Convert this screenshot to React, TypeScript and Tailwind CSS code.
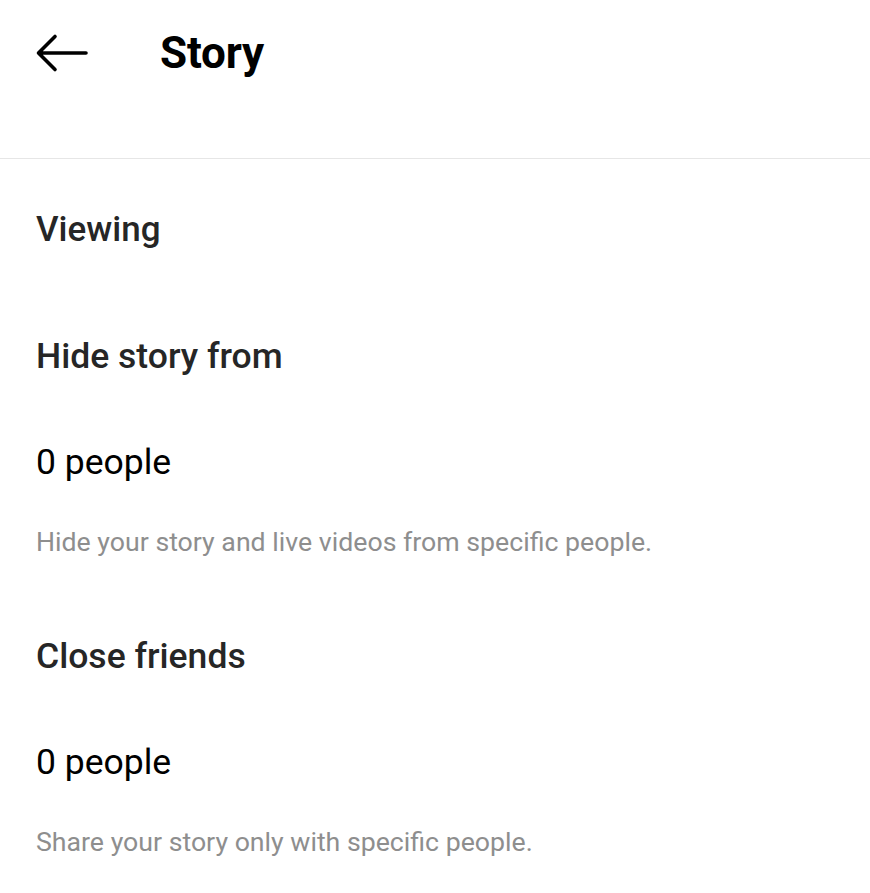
const SECTIONS = [
  {
    title: "Hide story from",
    value: "0 people",
    note: "Hide your story and live videos from specific people.",
    gap: "mt-[86px]",
  },
  {
    title: "Close friends",
    value: "0 people",
    note: "Share your story only with specific people.",
    gap: "mt-[79px]",
  },
];

function BackArrow() {
  return (
    <svg width="54" height="42" viewBox="0 0 54 42" fill="none" aria-hidden="true">
      <path
        d="M51 21H3.5M20 4.5 3.5 21 20 37.5"
        stroke="currentColor"
        strokeWidth="3.6"
        strokeLinecap="round"
        strokeLinejoin="round"
      />
    </svg>
  );
}

export default function App() {
  return (
    <div className="min-h-screen bg-white text-[#262626] font-['Roboto','Liberation_Sans',sans-serif]">
      <header className="h-[159px] border-b border-[#e6e6e6]">
        <div className="flex h-[106px] items-center pl-[35px]">
          <span className="text-black">
            <BackArrow />
          </span>
          <h1 className="ml-[71px] text-[44px] font-bold leading-none tracking-[-0.2px] text-black">
            Story
          </h1>
        </div>
      </header>

      <main className="px-[36px]">
        <h2 className="mt-[51px] text-[35px] font-medium leading-[40px]">Viewing</h2>

        {SECTIONS.map((s) => (
          <section key={s.title} className={s.gap}>
            <h3 className="text-[35.5px] font-medium leading-[40px]">{s.title}</h3>
            <p className="mt-[66px] text-[35.5px] leading-[40px] text-black">{s.value}</p>
            <p className="mt-[45px] text-[26.7px] leading-[30px] text-[#8e8e8e]">{s.note}</p>
          </section>
        ))}
      </main>
    </div>
  );
}
